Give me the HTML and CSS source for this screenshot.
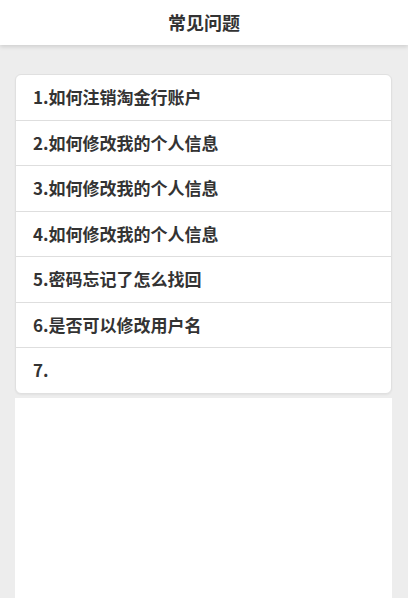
FILE: index.html
```html
<!DOCTYPE html>
<html lang="zh-CN">
<head>
<meta charset="utf-8">
<title>常见问题</title>
<link rel="stylesheet" href="styles.css">
</head>
<body>
<header class="topbar">常见问题</header>
<main class="page">
  <ul class="faq">
    <li class="faq-item">1.如何注销淘金行账户</li>
    <li class="faq-item">2.如何修改我的个人信息</li>
    <li class="faq-item">3.如何修改我的个人信息</li>
    <li class="faq-item">4.如何修改我的个人信息</li>
    <li class="faq-item">5.密码忘记了怎么找回</li>
    <li class="faq-item">6.是否可以修改用户名</li>
    <li class="faq-item">7.</li>
  </ul>
  <div class="filler"></div>
</main>
</body>
</html>
```
FILE: styles.css
```css
html, body {
  margin: 0;
  height: 100%;
}
body {
  background: #ededed;
  font-family: "Noto Sans CJK SC", "Noto Sans", sans-serif;
  color: #333;
  display: flex;
  flex-direction: column;
  overflow: hidden;
}
.topbar {
  height: 45px;
  line-height: 45px;
  background: #fff;
  text-align: center;
  font-size: 18px;
  font-weight: 700;
  color: #333;
  box-shadow: 0 2px 4px rgba(0, 0, 0, 0.12);
  position: relative;
  z-index: 1;
  flex: none;
}
.page {
  flex: 1;
  display: flex;
  flex-direction: column;
  padding: 29px 16px 0 15px;
}
.faq {
  list-style: none;
  margin: 0;
  padding: 0;
  background: #fff;
  border: 1px solid #e0e0e0;
  border-radius: 6px;
  box-shadow: 0 1px 2px rgba(0, 0, 0, 0.05);
}
.faq-item {
  height: 44.5px;
  line-height: 44.5px;
  padding-left: 17px;
  font-size: 17px;
  font-weight: 700;
  border-top: 1px solid #dedede;
}
.faq-item:first-child {
  border-top: none;
}
.filler {
  flex: 1;
  margin-top: 4px;
  background: #fff;
}
```
